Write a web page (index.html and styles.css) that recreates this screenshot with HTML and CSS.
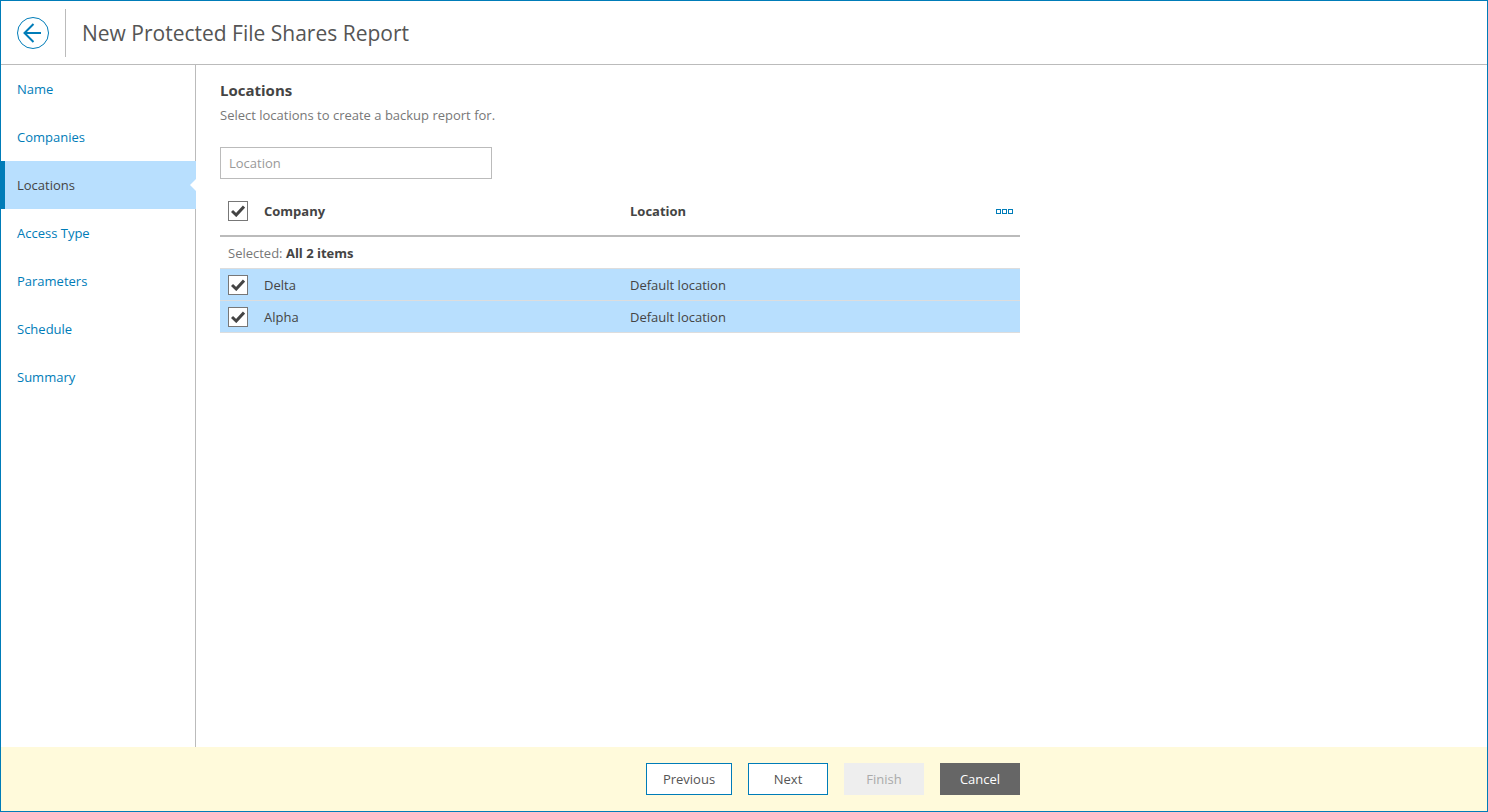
FILE: index.html
```html
<!DOCTYPE html>
<html lang="en">
<head>
<meta charset="utf-8">
<title>New Protected File Shares Report</title>
<link rel="stylesheet" href="styles.css">
</head>
<body>
<div class="frame">
  <header class="header">
    <button class="back" aria-label="Back">
      <svg width="32" height="32" viewBox="0 0 32 32" fill="none" stroke="#007cb8"><circle cx="16" cy="16" r="15.5"/><path d="M7.5 16H24M16.5 7L7.5 16L16.5 25" stroke-width="2"/></svg>
    </button>
    <div class="sep"></div>
    <h1 class="title">New Protected File Shares Report</h1>
  </header>
  <div class="middle">
    <nav class="side">
      <a class="step">Name</a>
      <a class="step">Companies</a>
      <a class="step active">Locations</a>
      <a class="step">Access Type</a>
      <a class="step">Parameters</a>
      <a class="step">Schedule</a>
      <a class="step">Summary</a>
    </nav>
    <main class="content">
      <h2 class="heading">Locations</h2>
      <p class="sub">Select locations to create a backup report for.</p>
      <div class="input">Location</div>
      <div class="table">
        <div class="row head">
          <span class="cb"><svg width="14" height="12" viewBox="0 0 14 12"><path d="M1 6L5.2 10L13 1.6" fill="none" stroke="#444" stroke-width="3"/></svg></span>
          <span class="col1">Company</span>
          <span class="col2">Location</span>
          <span class="dots"><i></i><i></i><i></i></span>
        </div>
        <div class="selected">Selected: <b>All 2 items</b></div>
        <div class="row item">
          <span class="cb"><svg width="14" height="12" viewBox="0 0 14 12"><path d="M1 6L5.2 10L13 1.6" fill="none" stroke="#444" stroke-width="3"/></svg></span>
          <span class="col1">Delta</span>
          <span class="col2">Default location</span>
        </div>
        <div class="row item">
          <span class="cb"><svg width="14" height="12" viewBox="0 0 14 12"><path d="M1 6L5.2 10L13 1.6" fill="none" stroke="#444" stroke-width="3"/></svg></span>
          <span class="col1">Alpha</span>
          <span class="col2">Default location</span>
        </div>
      </div>
    </main>
  </div>
  <footer class="footer">
    <div class="buttons">
      <button class="btn outline prev">Previous</button>
      <button class="btn outline next">Next</button>
      <button class="btn disabled">Finish</button>
      <button class="btn dark">Cancel</button>
    </div>
  </footer>
</div>
</body>
</html>
```
FILE: styles.css
```css
* { box-sizing: border-box; }
html, body { margin: 0; height: 100%; }
body { font-family: "Open Sans", "Liberation Sans", sans-serif; font-size: 13px; color: #444; background: #fff; overflow: hidden; }
.frame { width: 1488px; height: 812px; border: 1px solid #007cb8; display: flex; flex-direction: column; }
.header { height: 64px; flex: none; display: flex; align-items: center; border-bottom: 1px solid #bbb; padding-left: 16px; }
.back { width: 32px; height: 32px; padding: 0; border: 0; background: none; display: block; }
.back svg { display: block; }
.sep { width: 1px; height: 48px; background: #bbb; margin-left: 16px; }
.title { margin: 0 0 0 16px; font-size: 21px; font-weight: 400; color: #555; line-height: 30px; }
.middle { flex: 1; display: flex; min-height: 0; }
.side { width: 195px; flex: none; border-right: 1px solid #bbb; display: flex; flex-direction: column; }
.step { height: 48px; flex: none; display: flex; align-items: center; padding-left: 16px; color: #007cb8; position: relative; }
.step.active { background: #b8dffe; color: #444; border-left: 4px solid #007cb8; padding-left: 12px; margin-right: -1px; }
.step.active::after { content: ""; position: absolute; right: -1px; top: 17px; width: 7px; height: 14px; background: #fff; clip-path: polygon(100% 0, 0 50%, 100% 100%); }
.content { flex: 1; padding: 15px 0 0 24px; }
.heading { margin: 0; font-size: 15px; font-weight: 700; line-height: 20px; color: #444; }
.sub { margin: 6px 0 0; line-height: 18px; color: #777; }
.input { width: 272px; height: 32px; margin-top: 23px; border: 1px solid #bbb; padding-left: 8px; line-height: 30px; color: #999; }
.table { width: 800px; margin-top: 10px; }
.row { display: flex; align-items: center; position: relative; }
.head { height: 48px; border-bottom: 2px solid #bbb; padding-bottom: 2px; font-weight: 700; }
.cb { width: 20px; height: 20px; margin-left: 8px; border: 1px solid #777; background: #fff; display: flex; align-items: center; justify-content: center; flex: none; }
.col1 { width: 366px; margin-left: 16px; flex: none; }
.col2 { flex: 1; }
.dots { display: flex; gap: 1px; margin-right: 7px; }
.dots i { width: 5px; height: 5px; border: 1px solid #007cb8; display: block; }
.selected { height: 32px; border-bottom: 1px solid #ddd; padding-left: 8px; line-height: 32px; color: #777; }
.selected b { color: #444; }
.item { height: 32px; background: #b8dffe; border-bottom: 1px solid #ddd; }
.footer { height: 64px; flex: none; background: #fffadb; display: flex; padding: 16px 0 0 645px; }
.buttons { display: flex; gap: 16px; }
.btn { height: 32px; padding: 0; font: inherit; border: 0; background: none; color: #555; }
.outline { border: 1px solid #007cb8; background: #fff; }
.prev { width: 86px; }
.next { width: 80px; }
.disabled { width: 80px; background: #eee; color: #aaa; }
.dark { width: 80px; background: #666; color: #fff; }
```
